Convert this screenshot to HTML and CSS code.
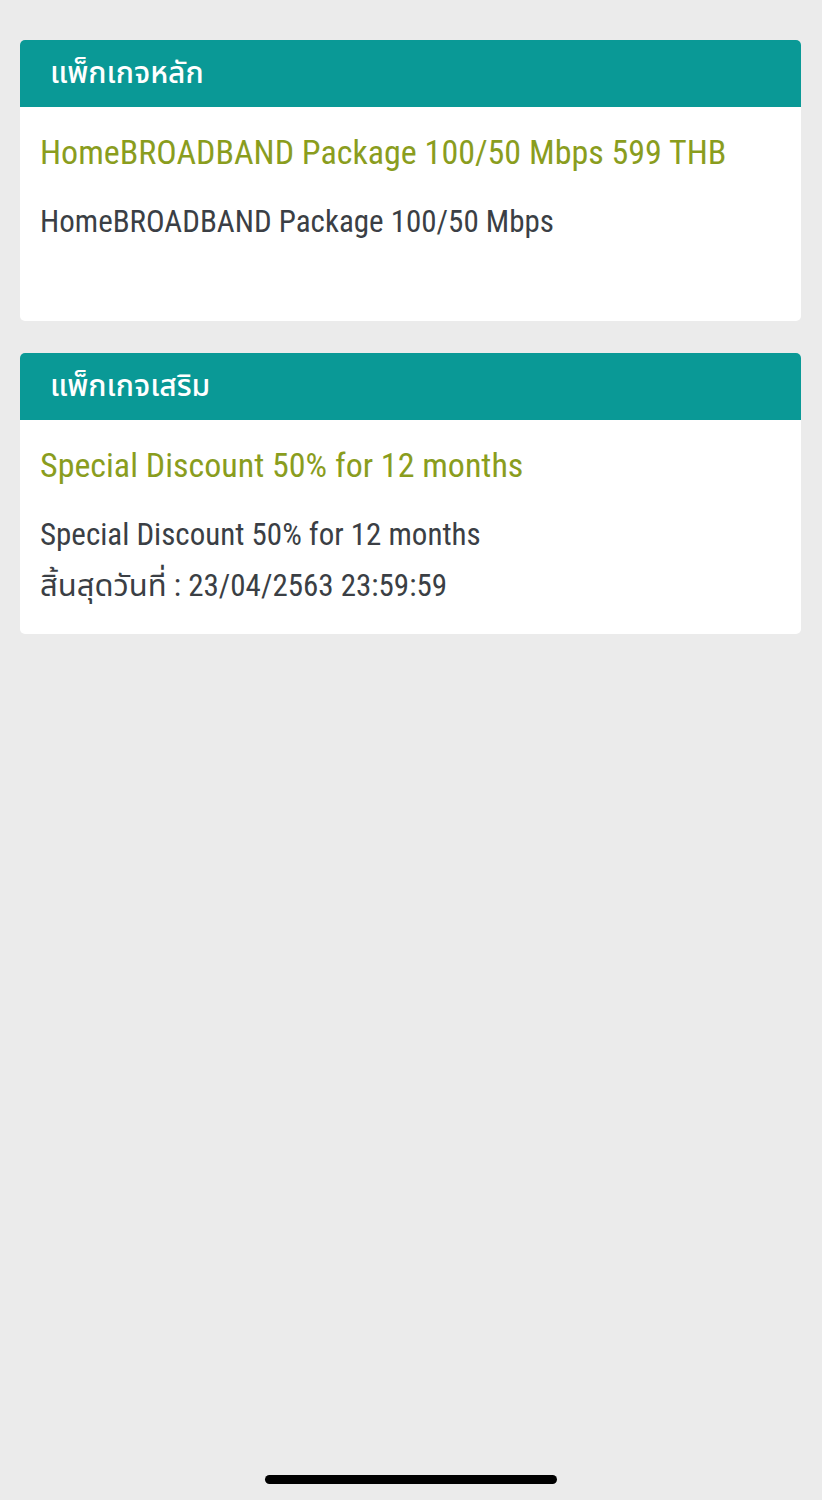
FILE: index.html
```html
<!DOCTYPE html>
<html lang="th">
<head>
<meta charset="utf-8">
<title>แพ็กเกจ</title>
<link rel="stylesheet" href="styles.css">
</head>
<body>
<main class="screen">
  <section class="card">
    <header class="card-head">แพ็กเกจหลัก</header>
    <div class="card-body">
      <div class="pkg-title">HomeBROADBAND Package 100/50 Mbps 599 THB</div>
      <div class="pkg-desc">
        <div class="line">HomeBROADBAND Package 100/50 Mbps</div>
        <div class="line">&nbsp;</div>
      </div>
    </div>
  </section>
  <section class="card">
    <header class="card-head">แพ็กเกจเสริม</header>
    <div class="card-body">
      <div class="pkg-title">Special Discount 50% for 12 months</div>
      <div class="pkg-desc">
        <div class="line">Special Discount 50% for 12 months</div>
        <div class="line">สิ้นสุดวันที่ : 23/04/2563 23:59:59</div>
      </div>
    </div>
  </section>
</main>
<div class="home-indicator"></div>
</body>
</html>
```
FILE: styles.css
```css
html, body {
  margin: 0;
  padding: 0;
}
body {
  background: #ebebeb;
  font-family: "Roboto Condensed", "Roboto", "Noto Sans Thai", "Noto Sans", sans-serif;
  font-stretch: 80%;
  height: 1500px;
  position: relative;
  overflow: hidden;
}
.screen {
  display: flex;
  flex-direction: column;
  gap: 32px;
  padding: 40px 21px 0 20px;
}
.card {
  background: #ffffff;
  border-radius: 5px;
  overflow: hidden;
}
.card-head {
  background: #0a9996;
  color: #ffffff;
  height: 67px;
  display: flex;
  align-items: center;
  padding-left: 30px;
  font-size: 30px;
  font-weight: 500;
}
.card-body {
  padding: 20px 20px 23px 20px;
}
.pkg-title {
  color: #8a9d1e;
  font-size: 34px;
  line-height: 50px;
  white-space: nowrap;
}
.pkg-desc {
  margin-top: 19px;
  color: #3b3f45;
  font-size: 31px;
  line-height: 51px;
}
.line {
  white-space: nowrap;
}
.home-indicator {
  position: absolute;
  left: 265px;
  top: 1475px;
  width: 292px;
  height: 9px;
  border-radius: 5px;
  background: #000000;
}
```
